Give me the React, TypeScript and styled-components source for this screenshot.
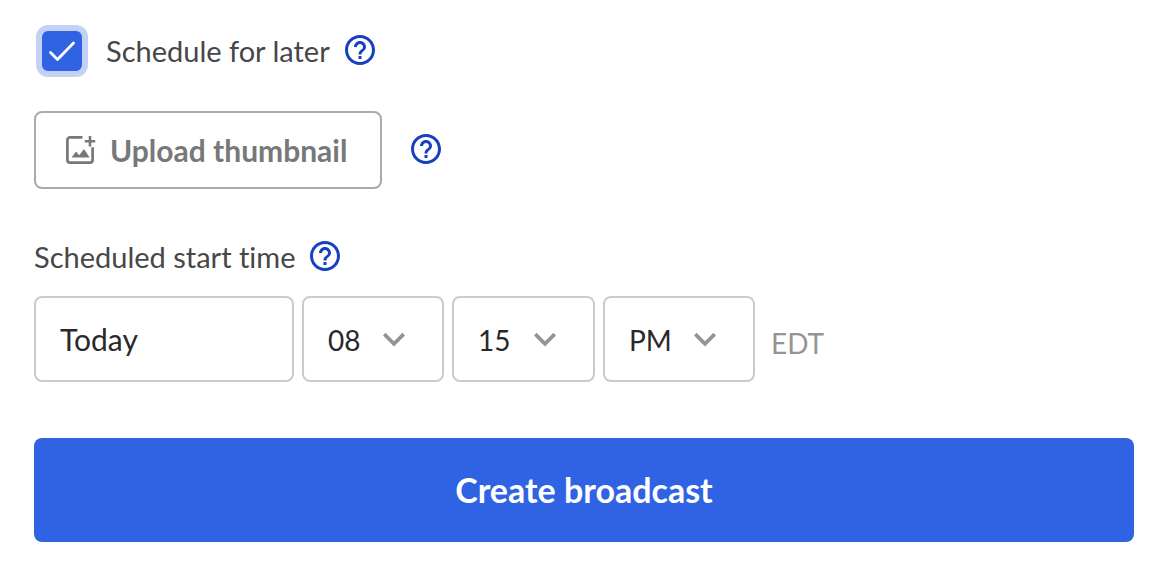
import React from "react";
import styled, { createGlobalStyle } from "styled-components";

const GlobalStyle = createGlobalStyle`
  *, *::before, *::after { box-sizing: border-box; }
  body {
    margin: 0;
    background: #ffffff;
    color: #464749;
    font-family: Lato, "Liberation Sans", sans-serif;
    font-size: 29px;
    font-variant-ligatures: none;
    line-height: 36px;
  }
  button, input, select { font: inherit; font-variant-ligatures: none; }
`;

const Form = styled.form`
  padding: 25px 30px 34px 34px;
`;

const Row = styled.div<{ $gap: number; $top?: number }>`
  display: flex;
  align-items: center;
  gap: ${(p) => p.$gap}px;
  margin-top: ${(p) => p.$top ?? 0}px;
`;

const CheckLabel = styled.label`
  display: flex;
  align-items: center;
  gap: 24px;
  padding: 6px 0 6px 8px;
`;

const CheckMark = styled.span`
  display: grid;
  width: 40px;
  height: 40px;

  > * { grid-area: 1 / 1; }
  svg { pointer-events: none; }
`;

const Checkbox = styled.input`
  appearance: none;
  width: 40px;
  height: 40px;
  margin: 0;
  border: 2px solid #2f63e3;
  border-radius: 6px;
  background: #ffffff;
  outline: none;
  box-shadow: 0 0 0 6px #c3d1f7;

  &:checked { background: #2f63e3; }
`;

const HelpButton = styled.button`
  display: block;
  height: 38px;
  width: 36px;
  padding: 0 0 2px;
  border: 0;
  background: none;
  color: #173fc2;
  cursor: pointer;

  svg { display: block; }
`;

const UploadButton = styled.button`
  display: flex;
  align-items: center;
  gap: 14px;
  min-width: 348px;
  height: 78px;
  padding: 0 28px;
  border: 2px solid #a9aaac;
  border-radius: 8px;
  background: #ffffff;
  color: #77787a;
  font-size: 30px;
  font-weight: 700;
  cursor: pointer;
`;

const fieldBox = `
  height: 86px;
  border: 2px solid #cbcbcc;
  border-radius: 8px;
  background: #ffffff;
  color: #29292b;
`;

const DateInput = styled.input`
  ${fieldBox}
  width: 260px;
  padding: 0 24px;
  font-size: 30px;
`;

const SelectWrap = styled.div<{ $width: number }>`
  position: relative;
  width: ${(p) => p.$width}px;
`;

const Select = styled.select`
  ${fieldBox}
  display: block;
  appearance: none;
  width: 100%;
  padding: 2px 24px 0;
  font-size: 28px;
`;

const Chevron = styled.svg`
  position: absolute;
  top: 22px;
  right: 28px;
  color: #949494;
  pointer-events: none;
`;

const Zone = styled.span`
  padding: 8px 0 0 8px;
  color: #949494;
  font-size: 28px;
`;

const Submit = styled.button`
  display: block;
  width: 100%;
  height: 104px;
  margin-top: 56px;
  padding: 0;
  border: 0;
  border-radius: 8px;
  background: #2f63e3;
  color: #ffffff;
  font-size: 34px;
  font-weight: 700;
  cursor: pointer;
`;

function Help({ about }: { about: string }) {
  return (
    <HelpButton type="button" aria-label={about}>
      <svg width="36" height="36" viewBox="0 0 24 24" fill="currentColor" aria-hidden="true">
        <path d="M11 18h2v-2h-2v2zm1-16C6.48 2 2 6.48 2 12s4.48 10 10 10 10-4.48 10-10S17.52 2 12 2zm0 18c-4.41 0-8-3.59-8-8s3.59-8 8-8 8 3.59 8 8-3.59 8-8 8zm0-14c-2.21 0-4 1.79-4 4h2c0-1.1.9-2 2-2s2 .9 2 2c0 2-3 1.75-3 5h2c0-2.25 3-2.5 3-5 0-2.21-1.79-4-4-4z" />
      </svg>
    </HelpButton>
  );
}

function AddImageIcon() {
  return (
    <svg width="32" height="32" viewBox="0 0 32 32" fill="none" aria-hidden="true">
      <path
        d="M18.5 3.4H6a2.6 2.6 0 0 0-2.6 2.6v20a2.6 2.6 0 0 0 2.6 2.6h20a2.6 2.6 0 0 0 2.6-2.6V13.2"
        stroke="currentColor"
        strokeWidth="2.7"
      />
      <path d="M26 2v10.4M20.8 7.2h10.4" stroke="currentColor" strokeWidth="2.6" />
      <path d="M7.5 23.5l4.5-6 3.2 3.8 4.8-6.3 5.6 8.5z" fill="currentColor" />
    </svg>
  );
}

function TimeSelect(props: { label: string; width: number; options: string[] }) {
  return (
    <SelectWrap $width={props.width}>
      <Select aria-label={props.label} defaultValue={props.options[0]}>
        {props.options.map((o) => (
          <option key={o}>{o}</option>
        ))}
      </Select>
      <Chevron width="44" height="44" viewBox="0 0 24 24" fill="currentColor" aria-hidden="true">
        <path d="M16.59 8.09L12 12.67 7.41 8.09 6 9.5l6 6 6-6z" />
      </Chevron>
    </SelectWrap>
  );
}

export default function App() {
  return (
    <>
      <GlobalStyle />
      <Form onSubmit={(e: React.FormEvent) => e.preventDefault()}>
        <Row $gap={12}>
          <CheckLabel>
            <CheckMark>
              <Checkbox type="checkbox" defaultChecked />
              <svg width="40" height="40" viewBox="0 0 40 40" fill="none" aria-hidden="true">
                <path
                  d="M8.5 21.5l7 7L31.5 12"
                  stroke="#ffffff"
                  strokeWidth="2.8"
                  strokeLinecap="round"
                  strokeLinejoin="round"
                />
              </svg>
            </CheckMark>
            Schedule for later
          </CheckLabel>
          <Help about="About scheduling" />
        </Row>

        <Row $gap={26} $top={34}>
          <UploadButton type="button">
            <AddImageIcon />
            Upload thumbnail
          </UploadButton>
          <Help about="About thumbnails" />
        </Row>

        <Row $gap={12} $top={49}>
          <label htmlFor="start-date">Scheduled start time</label>
          <Help about="About the start time" />
        </Row>

        <Row $gap={8} $top={20}>
          <DateInput id="start-date" type="text" defaultValue="Today" />
          <TimeSelect label="Hour" width={142} options={["08", "09", "10", "11"]} />
          <TimeSelect label="Minute" width={143} options={["15", "30", "45", "00"]} />
          <TimeSelect label="AM or PM" width={152} options={["PM", "AM"]} />
          <Zone>EDT</Zone>
        </Row>

        <Submit type="submit">Create broadcast</Submit>
      </Form>
    </>
  );
}
